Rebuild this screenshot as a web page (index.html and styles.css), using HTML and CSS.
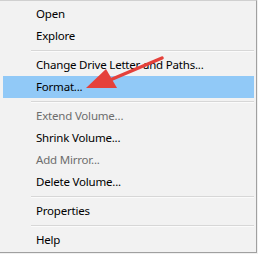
FILE: index.html
```html
<!DOCTYPE html>
<html lang="en">

<head>
    <meta charset="UTF-8">
    <meta name="viewport" content="width=device-width, initial-scale=1.0">
    <title>Disk Management menu</title>
    <link rel="stylesheet" href="styles.css">
</head>

<body>
    <div class="menu">
        <div class="item">Open</div>
        <div class="item">Explore</div>
        <div class="sep"></div>
        <div class="item">Change Drive Letter and Paths...</div>
        <div class="item active">Format...</div>
        <div class="sep"></div>
        <div class="item disabled">Extend Volume...</div>
        <div class="item">Shrink Volume...</div>
        <div class="item disabled">Add Mirror...</div>
        <div class="item">Delete Volume...</div>
        <div class="sep"></div>
        <div class="item">Properties</div>
        <div class="sep"></div>
        <div class="item">Help</div>

        <!-- seta vermelha apontando para Format -->
        <svg class="arrow" width="100" height="50" viewBox="0 0 100 50">
            <path d="M82 4 L30 26" stroke="#e5413b" stroke-width="3.5" stroke-linecap="round" fill="none" />
            <path d="M6 34 L26 15 L37 34 Z" fill="#e5413b" />
        </svg>
    </div>
</body>

</html>
```

FILE: styles.css
```css
body {
    margin: 0;
    padding: 0;
    background-color: #f0f0f0;
    font-family: "Noto Sans", "Open Sans", sans-serif;
    font-size: 11.5px;
    letter-spacing: -0.2px;
    color: #000;
}

.menu {
    position: relative;
    width: 257px;
    height: 253px;
    padding-top: 2px;
    box-sizing: border-box;
    background-color: #f2f2f2;
    border-right: 1px solid #a0a0a0;
    border-bottom: 1px solid #a0a0a0;
    border-top: 1px solid #d0d0d0;
}

.item {
    height: 22px;
    line-height: 22px;
    margin: 0 2px 0 3px;
    padding-left: 33px;
    white-space: nowrap;
}

.item.active {
    background-color: #91c9f7;
}

.item.disabled {
    color: #6d6d6d;
}

.sep {
    height: 1px;
    margin: 3px 2px 2px 31px;
    background-color: #d7d7d7;
    border-bottom: 1px solid #fbfbfb;
}

.arrow {
    position: absolute;
    left: 80px;
    top: 53px;
}
```
